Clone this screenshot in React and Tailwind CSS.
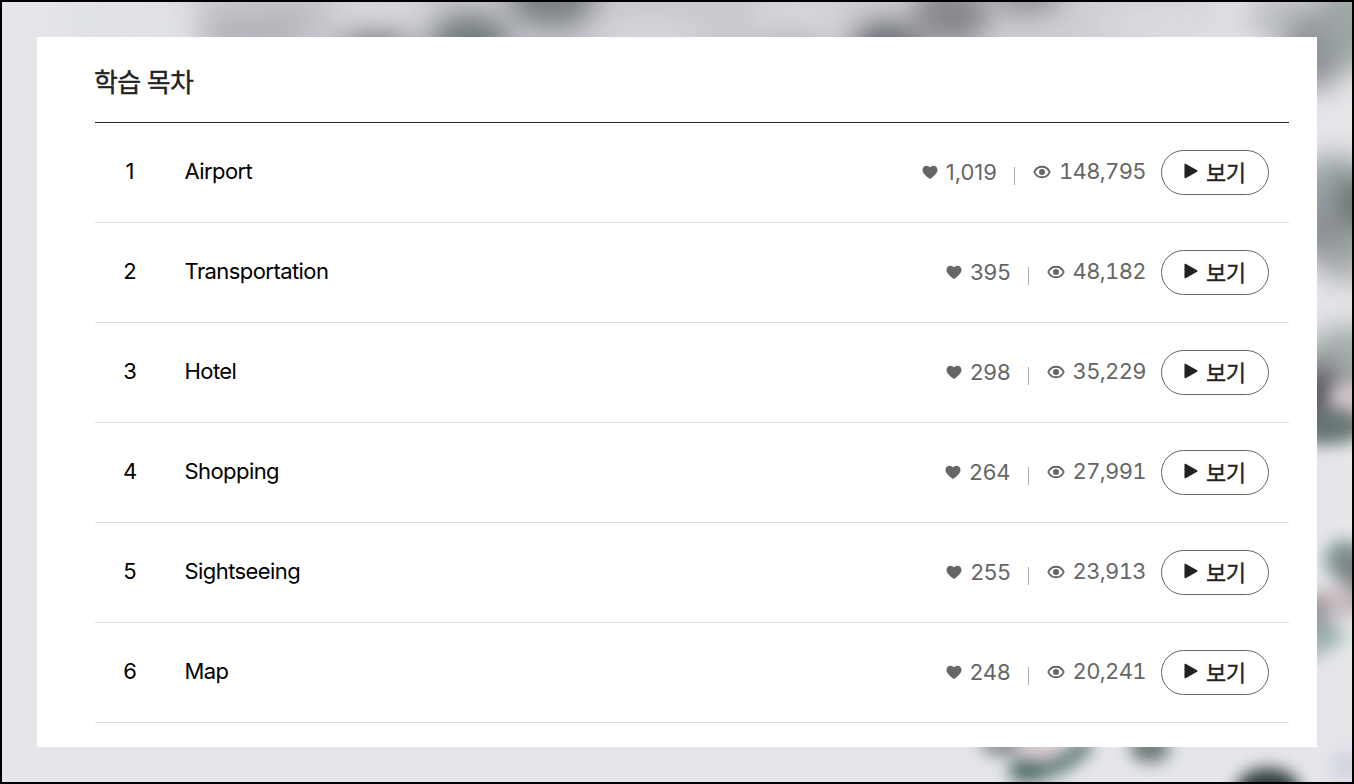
const LESSONS = [
  { title: 'Airport', likes: '1,019', views: '148,795' },
  { title: 'Transportation', likes: '395', views: '48,182' },
  { title: 'Hotel', likes: '298', views: '35,229' },
  { title: 'Shopping', likes: '264', views: '27,991' },
  { title: 'Sightseeing', likes: '255', views: '23,913' },
  { title: 'Map', likes: '248', views: '20,241' },
]

// cx, cy, rx, ry, fill, opacity
const SOFT_SPOTS = [
  [610, 10, 450, 80, '#c6c7cb', 0.95],
  [1000, 10, 220, 80, '#cbccd0', 0.9],
  [130, 20, 70, 50, '#dfe1e5', 0.9],
  [1180, 24, 80, 24, '#dcdce0', 0.9],
  [380, 8, 50, 18, '#dad9de', 1],
  [650, 34, 60, 16, '#d8dadd', 0.8],
  [795, 14, 50, 14, '#dbdbdf', 0.9],
  [250, 36, 54, 24, '#adacb1', 0.75],
  [296, 14, 26, 16, '#b4b6bb', 0.7],
  [376, 52, 36, 18, '#77787c', 1],
  [470, 42, 40, 28, '#727a7c', 1],
  [552, -4, 44, 32, '#7b7f82', 1],
  [886, 50, 34, 28, '#606468', 0.95],
  [951, 14, 38, 32, '#88878c', 1],
  [1028, -6, 34, 20, '#888b8e', 0.9],
  [792, 48, 26, 12, '#a5a8aa', 0.8],
  [1290, 16, 42, 30, '#b7b9bc', 0.9],
  [1314, 54, 30, 36, '#808287', 0.9],
  [1350, 24, 36, 46, '#9aa2a2', 0.95],
  [1335, 205, 50, 50, '#969ea0', 0.95],
  [1358, 202, 20, 26, '#646c6c', 0.95],
  [1316, 236, 24, 26, '#85858b', 0.8],
  [1345, 255, 30, 28, '#979c9d', 0.8],
  [1345, 362, 44, 36, '#9fa7a7', 0.95],
  [1314, 398, 26, 34, '#57565b', 1],
]

const SHARP_SPOTS = [
  [1328, 426, 40, 18, '#5f6f6e', 0.9],
  [1350, 397, 20, 14, '#d3c3cc', 0.95],
  [1345, 560, 20, 20, '#6d8581', 0.85],
  [1356, 582, 13, 30, '#73777a', 0.8],
  [1340, 602, 24, 18, '#c5b8be', 0.85],
  [1314, 616, 15, 22, '#89878c', 0.8],
  [1326, 636, 18, 12, '#8aa8a1', 0.8],
  [1314, 650, 12, 10, '#9aaaa7', 0.7],
  [1006, 746, 26, 10, '#6f7778', 0.85],
  [1026, 771, 18, 12, '#4d6965', 0.95],
  [1150, 748, 20, 15, '#5c6e6a', 0.9],
  [1268, 790, 32, 22, '#263335', 0.95],
  [1346, 766, 14, 16, '#cbd0dc', 0.8],
]

function Spots({ spots }) {
  return spots.map(([cx, cy, rx, ry, fill, opacity]) => (
    <ellipse key={`${cx}-${cy}`} cx={cx} cy={cy} rx={rx} ry={ry} fill={fill} opacity={opacity} />
  ))
}

function Backdrop() {
  return (
    <svg className="absolute inset-0" width="1354" height="784" viewBox="0 0 1354 784" aria-hidden="true">
      <defs>
        <filter id="soft" filterUnits="userSpaceOnUse" x="-60" y="-60" width="1474" height="904" colorInterpolationFilters="sRGB">
          <feGaussianBlur stdDeviation="14" />
        </filter>
        <filter id="sharp" filterUnits="userSpaceOnUse" x="-60" y="-60" width="1474" height="904" colorInterpolationFilters="sRGB">
          <feGaussianBlur stdDeviation="8" />
        </filter>
      </defs>
      <rect width="1354" height="784" fill="#e5e6ea" />
      <g filter="url(#soft)"><Spots spots={SOFT_SPOTS} /></g>
      <g filter="url(#sharp)">
        <path d="M1022 774Q1064 772 1088 740" fill="none" stroke="#5c7672" strokeWidth="18" opacity=".9" />
        <Spots spots={SHARP_SPOTS} />
        <ellipse cx="1036" cy="747" rx="20" ry="14" fill="#dccbd3" />
      </g>
    </svg>
  )
}

function HeartIcon() {
  return (
    <svg width="16" height="15" viewBox="0 0 16 15" fill="#666" className="mb-px" aria-hidden="true">
      <path d="M8 14.2C5.7 12.3.5 9 .5 5.1.5 2.5 2.2.8 4.4.8 5.9.8 7.2 1.5 8 2.6 8.8 1.5 10.1.8 11.6.8c2.2 0 3.9 1.7 3.9 4.3 0 3.9-5.2 7.2-7.5 9.1z" />
    </svg>
  )
}

function EyeIcon() {
  return (
    <svg width="18" height="14" viewBox="0 0 18 14" fill="none" className="mb-0.5" aria-hidden="true">
      <path d="M1.3 7C2.8 3.5 5.5 1.7 9 1.7S15.2 3.5 16.7 7C15.2 10.5 12.5 12.3 9 12.3S2.8 10.5 1.3 7z" stroke="#666" strokeWidth="1.9" />
      <circle cx="9" cy="7" r="3" fill="#666" />
    </svg>
  )
}

function LessonRow({ index, lesson }) {
  return (
    <li className="flex h-[100px] items-center border-b border-[#ddd] pr-5">
      <span className="w-[70px] pb-1 text-center text-[22px] leading-7 text-black">{index}</span>
      <span className="flex-1 pb-1 pl-[19.5px] text-[22px] leading-7 tracking-[-0.026em] text-black">{lesson.title}</span>
      <div className="flex items-center text-[22px] leading-7 text-[#666]">
        <HeartIcon />
        <span className="ml-2 pb-0.5">{lesson.likes}</span>
        <span className="mt-1.5 ml-[17px] h-[18px] w-px bg-[#aaa]" />
        <span className="ml-[18px]"><EyeIcon /></span>
        <span className="ml-2 pb-1 tracking-[-0.64px] tabular-nums">{lesson.views}</span>
      </div>
      <button className="ml-[15px] flex h-[45px] w-[108px] items-center rounded-full border border-[#666] pl-[21.5px] text-[#222]">
        <svg width="14" height="16" viewBox="0 0 14 16" className="mb-[3px]" aria-hidden="true">
          <path d="M1.2 1.5 12.8 8 1.2 14.5z" fill="#222" stroke="#222" strokeWidth="1.5" strokeLinejoin="round" />
        </svg>
        <span className="ml-[8.5px] text-[22px] leading-7 tracking-[-0.02em] [-webkit-text-stroke:0.35px_#222]">보기</span>
      </button>
    </li>
  )
}

export default function App() {
  return (
    <div className="relative h-[784px] w-[1354px] overflow-hidden font-['Inter','Noto_Sans_CJK_KR',sans-serif]">
      <Backdrop />
      <div className="relative h-full border-2 border-black px-[35px] py-[35px]">
        <main className="h-[710px] w-[1280px] bg-white pr-7 pl-[58px]">
          <h1 className="flex h-[86px] items-center border-b border-[#222] pt-1.5 text-[26px] tracking-[-0.03em] text-[#222] [-webkit-text-stroke:0.35px_#222]">
            <span className="-ml-px">학습 목차</span>
          </h1>
          <ul>
            {LESSONS.map((lesson, i) => (
              <LessonRow key={lesson.title} index={i + 1} lesson={lesson} />
            ))}
          </ul>
        </main>
      </div>
    </div>
  )
}
